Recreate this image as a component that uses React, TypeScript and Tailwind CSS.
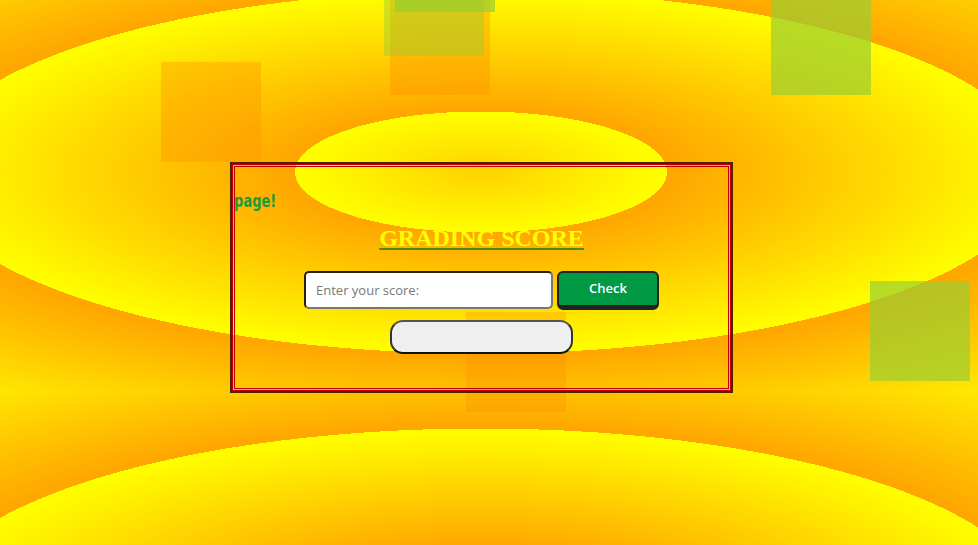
import React from "react";

const squares = [
  { cls: "left-[161px] top-[62px] bg-[#ff8c00]/35" },
  { cls: "left-[390px] top-[-5px] bg-[#ff8c00]/35" },
  { cls: "left-[466px] top-[312px] bg-[#ff8c00]/30" },
  { cls: "left-[384px] top-[-44px] bg-[#9acd32]/45" },
  { cls: "left-[395px] top-[-88px] bg-[#9acd32]/70" },
  { cls: "left-[771px] top-[-5px] bg-[#9acd32]/70" },
  { cls: "left-[870px] top-[281px] bg-[#9acd32]/70" },
];

export default function App() {
  return (
    <div className="relative w-[978px] h-[545px] overflow-hidden bg-[image:repeating-radial-gradient(ellipse_372px_121px_at_481px_219px,#ffa500_186px,#ffff00_558px)] bg-[length:978px_438px] bg-[position:0_-47px]">
      {/* floating squares */}
      {squares.map((s, i) => (
        <div key={i} className={`absolute w-[100px] h-[100px] ${s.cls}`} />
      ))}

      <div className="relative w-[963px] flex flex-col items-center pt-[164px]">
        <div className="w-[499px] h-[227px] border-[3px] border-double border-[#c40000] shadow-[0_0_0_2px_#4a2400] overflow-hidden flex flex-col items-center">
          {/* marquee */}
          <div className="relative w-full h-[20px] mt-[24px] overflow-hidden">
            <div className="absolute right-[452px] top-0 origin-right scale-x-[0.72] whitespace-nowrap font-['DejaVu_Sans',sans-serif] font-bold text-[18px] leading-[20px] text-[#1a9a3c]">
              Welcome to my grading page!
            </div>
          </div>

          <h1 className="mt-[13px] font-['Liberation_Serif',serif] font-bold text-[24px] leading-[28px] text-[#ffff00] underline decoration-[#4a8c12] decoration-2 underline-offset-[2px]">
            GRADING SCORE
          </h1>

          <div className="mt-[19px] flex items-start gap-[4px]">
            <input
              type="text"
              placeholder="Enter your score:"
              className="w-[249px] h-[38px] bg-white rounded-[5px] border-2 border-t-[#2a1e0e] border-l-[#2a1e0e] border-b-[#777] border-r-[#777] px-[10px] font-['Open_Sans',sans-serif] text-[13px] text-[#333] placeholder:text-[#777] outline-none"
            />
            <button className="w-[102px] h-[39px] rounded-[6px] bg-[#009a44] border-2 border-b-[5px] border-[#222] font-['Open_Sans',sans-serif] font-semibold text-[13px] text-white">
              Check
            </button>
          </div>

          <div className="mt-[10px] w-[183px] h-[34px] rounded-[13px] bg-[#efefef] border-2 border-[#333] border-t-[#555] border-b-[#111]" />
        </div>
      </div>
    </div>
  );
}
